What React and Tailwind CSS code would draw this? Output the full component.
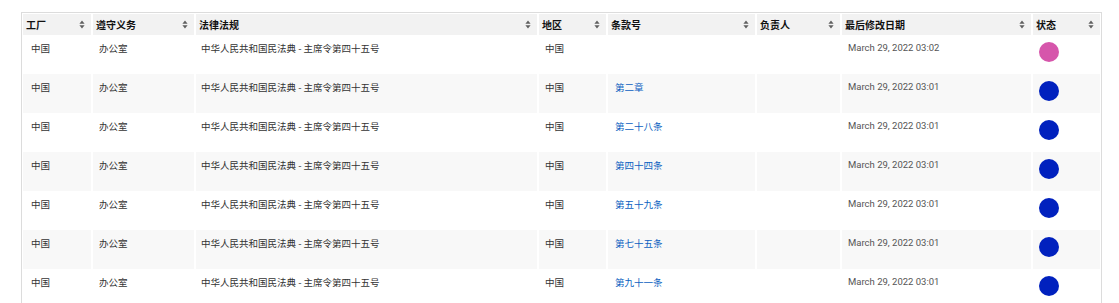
import React from 'react';

const columns = [
    { key: 'factory', title: '工厂', width: 'w-[68px]' },
    { key: 'duty', title: '遵守义务', width: 'w-[103px]' },
    { key: 'law', title: '法律法规', width: 'w-[343px]' },
    { key: 'region', title: '地区', width: 'w-[69px]' },
    { key: 'clause', title: '条款号', width: 'w-[149px]' },
    { key: 'owner', title: '负责人', width: 'w-[85px]' },
    { key: 'updated', title: '最后修改日期', width: 'w-[191px]' },
    { key: 'status', title: '状态', width: 'w-[69px]' },
];

const LAW = '中华人民共和国民法典 - 主席令第四十五号';

const rows = [
    { clause: '', updated: 'March 29, 2022 03:02', status: 'pink' },
    { clause: '第二章', updated: 'March 29, 2022 03:01', status: 'blue' },
    { clause: '第二十八条', updated: 'March 29, 2022 03:01', status: 'blue' },
    { clause: '第四十四条', updated: 'March 29, 2022 03:01', status: 'blue' },
    { clause: '第五十九条', updated: 'March 29, 2022 03:01', status: 'blue' },
    { clause: '第七十五条', updated: 'March 29, 2022 03:01', status: 'blue' },
    { clause: '第九十一条', updated: 'March 29, 2022 03:01', status: 'blue' },
];

const SortIcon = () => (
    <svg width="6" height="9" viewBox="0 0 6 9" className="shrink-0">
        <path d="M3 0.5 L5.6 3.8 L0.4 3.8 Z" fill="#5f5f5f" />
        <path d="M3 8.5 L5.6 5.2 L0.4 5.2 Z" fill="#5f5f5f" />
    </svg>
);

const App = () => {
    return (
        <div
            className="bg-white w-[1119px] h-[303px] overflow-hidden pt-3 pl-[21px]"
            style={{ fontFamily: '"Noto Sans CJK SC", "Noto Sans", sans-serif' }}
        >
            <div className="w-[1081px] border border-[#dcdcdc] p-px">
                {/* 表头 */}
                <div className="flex h-[21px] bg-[#f2f2f2]">
                    {columns.map((col, i) => (
                        <div
                            key={col.key}
                            className={`${col.width} flex items-center justify-between pl-[3px] pr-[6px] ${i > 0 ? 'border-l-2 border-white' : ''}`}
                        >
                            <span className="text-[10px] font-bold text-[#111] leading-none">{col.title}</span>
                            <SortIcon />
                        </div>
                    ))}
                </div>

                {/* 数据行 */}
                {rows.map((row, r) => (
                    <div
                        key={r}
                        className={`flex h-[39px] text-[9.5px] leading-[14px] text-[#333] ${r % 2 === 1 ? 'bg-[#f8f8f8]' : 'bg-white'}`}
                    >
                        <div className="w-[68px] pl-[8px] pt-[6px]">中国</div>
                        <div className="w-[103px] pl-[6px] pt-[6px] border-l-2 border-white">办公室</div>
                        <div className="w-[343px] pl-[5px] pt-[6px] border-l-2 border-white">{LAW}</div>
                        <div className="w-[69px] pl-[6px] pt-[6px] border-l-2 border-white">中国</div>
                        <div className="w-[149px] pl-[7px] pt-[6px] border-l-2 border-white text-[#0b5fc1]">{row.clause}</div>
                        <div className="w-[85px] border-l-2 border-white"></div>
                        <div
                            className="w-[191px] pl-[6px] pt-[6px] border-l-2 border-white text-[#555]"
                            style={{ fontFamily: 'Roboto, "Liberation Sans", sans-serif' }}
                        >
                            {row.updated}
                        </div>
                        <div className="w-[69px] pl-[6px] pt-[7px] border-l-2 border-white">
                            <div
                                className={`w-5 h-5 rounded-full ${row.status === 'pink' ? 'bg-[#d656ab]' : 'bg-[#0121be]'}`}
                            ></div>
                        </div>
                    </div>
                ))}
            </div>
        </div>
    );
};

export default App;
